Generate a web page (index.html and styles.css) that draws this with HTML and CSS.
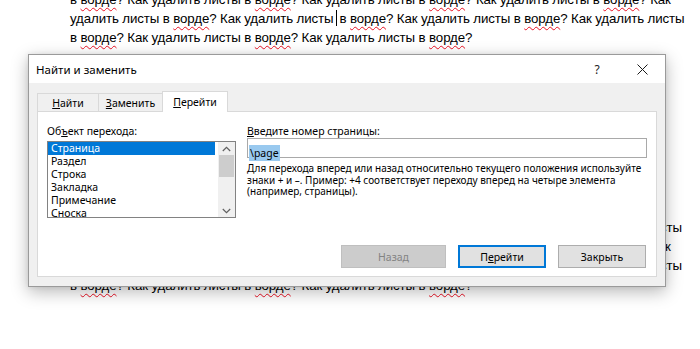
FILE: index.html
```html
<!DOCTYPE html>
<html lang="ru">
<head>
    <meta charset="UTF-8">
    <meta name="viewport" content="width=device-width, initial-scale=1.0">
    <title>Найти и заменить</title>
    <link rel="stylesheet" href="styles.css">
</head>
<body>

    <div class="doc">
        <div class="line">в <span class="sp">ворде</span>? Как удалить листы в <span class="sp">ворде</span>? Как удалить листы в <span class="sp">ворде</span>? Как удалить листы в <span class="sp">ворде</span>? Как</div>
        <div class="line">удалить листы в <span class="sp">ворде</span>? Как удалить листы<span class="caret"></span>в <span class="sp">ворде</span>? Как удалить листы в <span class="sp">ворде</span>? Как удалить листы</div>
        <div class="line">в <span class="sp">ворде</span>? Как удалить листы в <span class="sp">ворде</span>? Как удалить листы в <span class="sp">ворде</span>?</div>
        <div class="line blank"></div>
        <div class="line blank"></div>
        <div class="line blank"></div>
        <div class="line blank"></div>
        <div class="line blank"></div>
        <div class="line blank"></div>
        <div class="line blank"></div>
        <div class="line blank"></div>
        <div class="line blank"></div>
        <div class="line">удалить листы в <span class="sp">ворде</span>? Как удалить листы в <span class="sp">ворде</span>? Как удалить листы в <span class="sp">ворде</span>? Как удалить листы</div>
        <div class="line">в <span class="sp">ворде</span>? Как удалить листы в <span class="sp">ворде</span>? Как удалить листы в <span class="sp">ворде</span>? Как удалить листы в <span class="sp">ворде</span>? Как</div>
        <div class="line">удалить листы в <span class="sp">ворде</span>? Как удалить листы в <span class="sp">ворде</span>? Как удалить листы в <span class="sp">ворде</span>? Как удалить листы</div>
        <div class="line last">в <span class="sp">ворде</span>? Как удалить листы в <span class="sp">ворде</span>? Как удалить листы в <span class="sp">ворде</span>?</div>
    </div>

    <div class="dialog">
        <div class="titlebar">
            <span class="title">Найти и заменить</span>
            <span class="tb-help">?</span>
            <span class="tb-close">
                <svg width="11" height="11" viewBox="0 0 11 11"><path d="M0.5 0.5 L10.5 10.5 M10.5 0.5 L0.5 10.5" stroke="#1a1a1a" stroke-width="1" fill="none"/></svg>
            </span>
        </div>

        <div class="dlg-body">
            <div class="tabs">
                <div class="tab"><u>Н</u>айти</div>
                <div class="tab"><u>З</u>аменить</div>
                <div class="tab active"><u>П</u>ерейти</div>
            </div>

            <div class="panel">
                <div class="panel-top">
                    <div class="col-left">
                        <div class="label">Об<u>ъ</u>ект перехода:</div>
                        <div class="listbox">
                            <ul class="items">
                                <li class="selected">Страница</li>
                                <li>Раздел</li>
                                <li>Строка</li>
                                <li>Закладка</li>
                                <li>Примечание</li>
                                <li>Сноска</li>
                            </ul>
                            <div class="scrollbar">
                                <span class="arrow">
                                    <svg width="9" height="6" viewBox="0 0 9 6"><path d="M0.8 5 L4.5 1.3 L8.2 5" stroke="#606060" stroke-width="1.2" fill="none"/></svg>
                                </span>
                                <div class="track"><div class="thumb"></div></div>
                                <span class="arrow">
                                    <svg width="9" height="6" viewBox="0 0 9 6"><path d="M0.8 1 L4.5 4.7 L8.2 1" stroke="#606060" stroke-width="1.2" fill="none"/></svg>
                                </span>
                            </div>
                        </div>
                    </div>

                    <div class="col-right">
                        <div class="label"><u>В</u>ведите номер страницы:</div>
                        <div class="input"><span class="sel">\page</span></div>
                        <p class="hint">Для перехода вперед или назад относительно текущего положения используйте знаки + и –. Пример: +4 соответствует переходу вперед на четыре элемента (например, страницы).</p>
                    </div>
                </div>

                <div class="buttons">
                    <button class="btn wide" disabled>Назад</button>
                    <button class="btn default">П<u>е</u>рейти</button>
                    <button class="btn">Закрыть</button>
                </div>
            </div>
        </div>
    </div>

</body>
</html>
```

FILE: styles.css
```css
body {
    margin: 0;
    width: 700px;
    height: 349px;
    overflow: hidden;
    position: relative;
    background-color: #fff;
    font-family: "Noto Sans", "Open Sans", sans-serif;
}

/* document behind the dialog */
.doc {
    padding-left: 70px;
    margin-top: -10px;
    font-family: "Liberation Sans", Arial, sans-serif;
    font-size: 13.3px;
    letter-spacing: -0.12px;
    color: #000;
}
.line {
    height: 19px;
    line-height: 19px;
    white-space: nowrap;
}
.line.last {
    margin-top: 1px;
}
.sp {
    text-decoration: underline wavy #e81123;
    text-decoration-thickness: 1px;
    text-underline-offset: 3px;
}
.caret {
    display: inline-block;
    width: 1px;
    height: 16px;
    margin: 0 2px 0 3px;
    background-color: #000;
    vertical-align: -3px;
}

/* dialog */
.dialog {
    position: absolute;
    left: 28px;
    top: 54px;
    width: 638px;
    height: 233px;
    box-sizing: border-box;
    border: 1px solid #9a9a9a;
    background-color: #f0f0f0;
    box-shadow: 0 5px 16px rgba(0, 0, 0, 0.28), 0 0 5px rgba(0, 0, 0, 0.08);
    display: flex;
    flex-direction: column;
}
.titlebar {
    height: 28px;
    background-color: #fff;
    display: flex;
    align-items: center;
    padding-left: 7px;
}
.title {
    flex: 1;
    font-size: 11.5px;
    color: #000;
}
.tb-help {
    width: 30px;
    margin-right: 7px;
    text-align: center;
    font-size: 12px;
    color: #222;
}
.tb-close {
    width: 46px;
    height: 28px;
    display: flex;
    align-items: center;
    justify-content: center;
}
.dlg-body {
    flex: 1;
    padding: 8px 8px 9px 8px;
    display: flex;
    flex-direction: column;
}

/* tabs */
.tabs {
    display: flex;
    align-items: flex-end;
    height: 20px;
    position: relative;
    z-index: 1;
}
.tab {
    height: 18px;
    box-sizing: border-box;
    border: 1px solid #d9d9d9;
    border-bottom: none;
    margin-right: -1px;
    background-color: #f0f0f0;
    font-size: 10.5px;
    line-height: 18px;
    text-align: center;
    color: #000;
    width: 62px;
}
.tab:nth-child(2) {
    width: 65px;
}
.tab.active {
    width: 66px;
    height: 21px;
    margin-bottom: -1px;
    background-color: #fff;
    line-height: 20px;
}

.panel {
    flex: 1;
    background-color: #fff;
    border: 1px solid #d9d9d9;
    padding: 12px 9px 8px 9px;
    display: flex;
    flex-direction: column;
}
.panel-top {
    display: flex;
    gap: 11px;
}
.label {
    height: 14px;
    font-size: 10.5px;
    line-height: 14px;
    color: #000;
}
.col-left {
    width: 189px;
}
.col-left .label {
    margin-bottom: 3px;
}
.col-right {
    flex: 1;
}

/* list box */
.listbox {
    height: 77px;
    box-sizing: border-box;
    border: 1px solid #828282;
    display: flex;
}
.items {
    flex: 1;
    list-style-type: none;
    margin: 0;
    padding: 0 3px 0 0;
    overflow: hidden;
}
.items li {
    height: 13px;
    line-height: 12px;
    padding-left: 3px;
    font-size: 10.5px;
    color: #000;
}
.items li.selected {
    background-color: #0078d7;
    color: #fff;
}
.scrollbar {
    width: 17px;
    background-color: #f0f0f0;
    display: flex;
    flex-direction: column;
}
.arrow {
    height: 13px;
    display: flex;
    align-items: center;
    justify-content: center;
}
.track {
    flex: 1;
}
.thumb {
    height: 22px;
    margin: 0 1px;
    background-color: #cdcdcd;
}

/* page number input */
.input {
    height: 20px;
    box-sizing: border-box;
    border: 1px solid #a9a9a9;
    padding: 1px;
}
.sel {
    display: inline-block;
    height: 16px;
    line-height: 16px;
    padding: 0 1px;
    background-color: #99c9ef;
    font-size: 10.5px;
    color: #000;
}
.hint {
    margin: 5px 0 0 0;
    font-size: 10px;
    line-height: 11.7px;
    color: #000;
}

/* buttons */
.buttons {
    margin-top: auto;
    margin-right: 1px;
    display: flex;
    justify-content: flex-end;
    gap: 12px;
}
.btn {
    width: 88px;
    height: 23px;
    box-sizing: border-box;
    border: 1px solid #adadad;
    background-color: #e1e1e1;
    font-family: "Noto Sans", "Open Sans", sans-serif;
    font-size: 10.5px;
    color: #000;
    padding: 0;
}
.btn.wide {
    width: 105px;
}
.btn:disabled {
    background-color: #cccccc;
    border-color: #bfbfbf;
    color: #838383;
}
.btn.default {
    border-color: #0078d7;
    box-shadow: inset 0 0 0 1px #0078d7;
}
```
